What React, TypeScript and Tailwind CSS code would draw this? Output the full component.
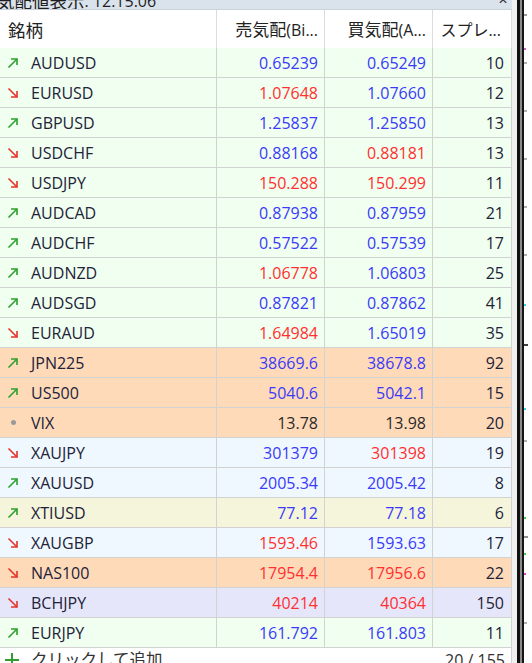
import React from "react";

type Dir = "up" | "down" | "none";
type C = "b" | "r" | "k";
type Row = { s: string; d: Dir; bid: string; bc: C; ask: string; ac: C; sp: string; bg: string };

const rows: Row[] = [
  { s: "AUDUSD", d: "up", bid: "0.65239", bc: "b", ask: "0.65249", ac: "b", sp: "10", bg: "bg-[#f0fff0]" },
  { s: "EURUSD", d: "down", bid: "1.07648", bc: "r", ask: "1.07660", ac: "b", sp: "12", bg: "bg-[#f0fff0]" },
  { s: "GBPUSD", d: "up", bid: "1.25837", bc: "b", ask: "1.25850", ac: "b", sp: "13", bg: "bg-[#f0fff0]" },
  { s: "USDCHF", d: "down", bid: "0.88168", bc: "b", ask: "0.88181", ac: "r", sp: "13", bg: "bg-[#f0fff0]" },
  { s: "USDJPY", d: "down", bid: "150.288", bc: "r", ask: "150.299", ac: "r", sp: "11", bg: "bg-[#f0fff0]" },
  { s: "AUDCAD", d: "up", bid: "0.87938", bc: "b", ask: "0.87959", ac: "b", sp: "21", bg: "bg-[#f0fff0]" },
  { s: "AUDCHF", d: "up", bid: "0.57522", bc: "b", ask: "0.57539", ac: "b", sp: "17", bg: "bg-[#f0fff0]" },
  { s: "AUDNZD", d: "up", bid: "1.06778", bc: "r", ask: "1.06803", ac: "b", sp: "25", bg: "bg-[#f0fff0]" },
  { s: "AUDSGD", d: "up", bid: "0.87821", bc: "b", ask: "0.87862", ac: "b", sp: "41", bg: "bg-[#f0fff0]" },
  { s: "EURAUD", d: "down", bid: "1.64984", bc: "r", ask: "1.65019", ac: "b", sp: "35", bg: "bg-[#f0fff0]" },
  { s: "JPN225", d: "up", bid: "38669.6", bc: "b", ask: "38678.8", ac: "b", sp: "92", bg: "bg-[#ffdab9]" },
  { s: "US500", d: "up", bid: "5040.6", bc: "b", ask: "5042.1", ac: "b", sp: "15", bg: "bg-[#ffdab9]" },
  { s: "VIX", d: "none", bid: "13.78", bc: "k", ask: "13.98", ac: "k", sp: "20", bg: "bg-[#ffdab9]" },
  { s: "XAUJPY", d: "down", bid: "301379", bc: "b", ask: "301398", ac: "r", sp: "19", bg: "bg-[#f0f8ff]" },
  { s: "XAUUSD", d: "up", bid: "2005.34", bc: "b", ask: "2005.42", ac: "b", sp: "8", bg: "bg-[#f0f8ff]" },
  { s: "XTIUSD", d: "up", bid: "77.12", bc: "b", ask: "77.18", ac: "b", sp: "6", bg: "bg-[#f5f5dc]" },
  { s: "XAUGBP", d: "down", bid: "1593.46", bc: "r", ask: "1593.63", ac: "b", sp: "17", bg: "bg-[#f0f8ff]" },
  { s: "NAS100", d: "down", bid: "17954.4", bc: "r", ask: "17956.6", ac: "r", sp: "22", bg: "bg-[#ffdab9]" },
  { s: "BCHJPY", d: "down", bid: "40214", bc: "r", ask: "40364", ac: "r", sp: "150", bg: "bg-[#e6e6fa]" },
  { s: "EURJPY", d: "up", bid: "161.792", bc: "b", ask: "161.803", ac: "b", sp: "11", bg: "bg-[#f0fff0]" },
];

const colorCls: Record<C, string> = {
  b: "text-[#3a3af8]",
  r: "text-[#ff3030]",
  k: "text-[#2a2a2a]",
};

function Arrow({ d }: { d: Dir }) {
  if (d === "none") {
    return (
      <div className="w-[12px] h-[12px] flex items-center justify-center">
        <div className="w-[5px] h-[5px] rounded-full bg-[#9a9a9a]" />
      </div>
    );
  }
  if (d === "up") {
    return (
      <svg width="12" height="12" viewBox="0 0 12 12" fill="none" stroke="#2ca02c" strokeWidth="1.6">
        <path d="M1.5 10.5 L10 2" />
        <path d="M4 2 H10 V8" />
      </svg>
    );
  }
  return (
    <svg width="12" height="12" viewBox="0 0 12 12" fill="none" stroke="#e5332a" strokeWidth="1.6">
      <path d="M1.5 1.5 L10 10" />
      <path d="M10 4 V10 H4" />
    </svg>
  );
}

const dots: { y: number; c: string; w?: number }[] = [
  { y: 14, c: "bg-[#9a9a9a]", w: 3 },
  { y: 48, c: "bg-[#d060d0]" },
  { y: 62, c: "bg-[#b0b0b0]", w: 3 },
  { y: 110, c: "bg-[#b0b0b0]", w: 3 },
  { y: 158, c: "bg-[#b0b0b0]", w: 3 },
  { y: 206, c: "bg-[#b0b0b0]", w: 3 },
  { y: 254, c: "bg-[#b0b0b0]", w: 3 },
  { y: 304, c: "bg-[#30d0f0]" },
  { y: 344, c: "bg-[#404040]", w: 4 },
  { y: 408, c: "bg-[#30d0f0]" },
  { y: 440, c: "bg-[#b0b0b0]", w: 3 },
  { y: 517, c: "bg-[#40d040]" },
  { y: 536, c: "bg-[#909090]", w: 4 },
  { y: 553, c: "bg-[#40d040]" },
  { y: 573, c: "bg-[#e040e0]" },
  { y: 622, c: "bg-[#b0b0b0]", w: 3 },
];

export default function App() {
  return (
    <div className="w-[532px] h-[663px] overflow-hidden flex bg-white font-['Open_Sans','Noto_Sans_CJK_JP',sans-serif] text-[16px] text-[#222230]">
      <div className="w-[512px] flex flex-col shrink-0">
        {/* title bar */}
        <div className="h-[10px] bg-[#dae2ec] border-b border-[#c9d1dc] overflow-hidden relative shrink-0">
          <div className="flex items-start mt-[-7px] ml-[-3px] leading-[16px] text-[#1e1e1e] whitespace-nowrap">
            <span className="text-[17.5px]">気配値表示</span>
            <span>: 12:15:06</span>
          </div>
          <span className="absolute right-[4px] top-[-6px] text-[12px] leading-[12px] text-[#333]">✕</span>
        </div>
        {/* header */}
        <div className="grid grid-cols-[217px_108px_108px_79px] h-[38px] bg-white shrink-0">
          <div className="border-r border-[#dcdcdc] flex items-center pl-[8px] pt-[2px]">
            <span className="text-[17.5px] text-[#222]">銘柄</span>
          </div>
          <div className="border-r border-[#dcdcdc] flex items-center justify-end pr-[6px] pt-[2px] whitespace-nowrap overflow-hidden">
            <span className="text-[17px] text-[#222]">売気配</span>
            <span className="text-[#222]">(Bi...</span>
          </div>
          <div className="border-r border-[#dcdcdc] flex items-center justify-end pr-[6px] pt-[2px] whitespace-nowrap overflow-hidden">
            <span className="text-[17px] text-[#222]">買気配</span>
            <span className="text-[#222]">(A...</span>
          </div>
          <div className="border-r border-[#dcdcdc] flex items-center justify-end pr-[10px] pt-[2px] whitespace-nowrap overflow-hidden">
            <span className="text-[16px] text-[#222]">スプレ</span>
            <span className="text-[#222]">...</span>
          </div>
        </div>
        {/* rows */}
        {rows.map((r) => (
          <div
            key={r.s}
            className={`grid grid-cols-[217px_108px_108px_79px] h-[30px] border-b border-[#d2d2d2] shrink-0 ${r.bg}`}
          >
            <div className="border-r border-[#d2d2d2] flex items-center">
              <div className="w-[31px] pl-[7px] flex items-center">
                <Arrow d={r.d} />
              </div>
              <span className="text-[#222238]">{r.s}</span>
            </div>
            <div className={`border-r border-[#d2d2d2] flex items-center justify-end pr-[6px] ${colorCls[r.bc]}`}>
              {r.bid}
            </div>
            <div className={`border-r border-[#d2d2d2] flex items-center justify-end pr-[6px] ${colorCls[r.ac]}`}>
              {r.ask}
            </div>
            <div className="border-r border-[#d2d2d2] flex items-center justify-end pr-[7px] text-[#222238]">
              {r.sp}
            </div>
          </div>
        ))}
        {/* footer */}
        <div className="h-[24px] flex items-center justify-between bg-white shrink-0 border-r border-[#d2d2d2]">
          <div className="flex items-center">
            <div className="w-[31px] pl-[5px] flex items-center">
              <svg width="14" height="14" viewBox="0 0 14 14" fill="none" stroke="#2f9e2f" strokeWidth="2">
                <path d="M7 0 V14 M0 7 H14" />
              </svg>
            </div>
            <span className="text-[16.5px] text-[#333]">クリックして追加</span>
          </div>
          <span className="pr-[6px] text-[#333]">20 / 155</span>
        </div>
      </div>
      {/* right edge */}
      <div className="w-[5px] bg-[#f0f0f0] shrink-0" />
      <div className="w-[3px] bg-[#101010] shrink-0" />
      <div className="w-[2px] bg-[#8a8a8a] shrink-0" />
      <div className="w-[2px] bg-[#151515] shrink-0" />
      <div className="w-[8px] bg-white shrink-0 relative">
        {dots.map((d, i) => (
          <div
            key={i}
            className={`absolute left-0 h-[2px] ${d.c}`}
            style={{ top: d.y, width: d.w ?? 2 }}
          />
        ))}
      </div>
    </div>
  );
}
